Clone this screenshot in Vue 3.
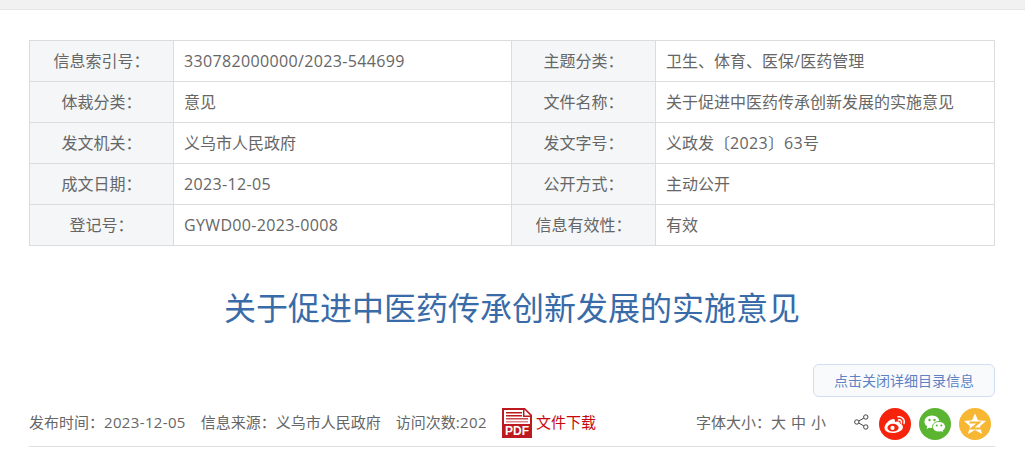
<script setup>
const rows = [
  ['信息索引号：', '330782000000/2023-544699', '主题分类：', '卫生、体育、医保/医药管理'],
  ['体裁分类：', '意见', '文件名称：', '关于促进中医药传承创新发展的实施意见'],
  ['发文机关：', '义乌市人民政府', '发文字号：', '义政发〔2023〕63号'],
  ['成文日期：', '2023-12-05', '公开方式：', '主动公开'],
  ['登记号：', 'GYWD00-2023-0008', '信息有效性：', '有效']
]
const runs = (s) => s.match(/[\x00-\x7f]+|[^\x00-\x7f]+/g).map((t) => ({ t, latin: /^[\x00-\x7f]/.test(t) }))
</script>

<template>
  <div class="page">
    <div class="topbar"></div>
    <main class="content">
      <table class="info">
        <colgroup>
          <col class="c-label" />
          <col class="c-val1" />
          <col class="c-label" />
          <col class="c-val2" />
        </colgroup>
        <tbody>
          <tr v-for="(r, i) in rows" :key="i">
            <th>{{ r[0] }}</th>
            <td><span v-for="(s, k) in runs(r[1])" :key="k" :class="{ latin: s.latin }">{{ s.t }}</span></td>
            <th>{{ r[2] }}</th>
            <td><span v-for="(s, k) in runs(r[3])" :key="k" :class="{ latin: s.latin }">{{ s.t }}</span></td>
          </tr>
        </tbody>
      </table>
      <h1 class="title">关于促进中医药传承创新发展的实施意见</h1>
      <div class="btn-row">
        <button class="toggle">点击关闭详细目录信息</button>
      </div>
      <div class="meta">
        <div class="meta-left">
          <span class="m1">发布时间：<span class="latin">2023-12-05</span></span>
          <span class="m2">信息来源：义乌市人民政府</span>
          <span class="m3">访问次数<span class="latin">:202</span></span>
          <svg class="pdf" width="30" height="30" viewBox="0 0 30 30">
            <path d="M0 0H23L30 7V30H0Z" fill="#bc1a20" />
            <path d="M2 2H21V9H28V28H2Z" fill="#fff" />
            <path d="M22.500 1.800L28.200 7.500H22.500Z" fill="#fff" />
            <rect x="4" y="4" width="16" height="1.500" fill="#bc1a20" />
            <rect x="4" y="7" width="16" height="1.500" fill="#bc1a20" />
            <rect x="4" y="10" width="22" height="1.500" fill="#c9474b" />
            <rect x="4" y="13" width="22" height="1.500" fill="#d98a8c" />
            <rect x="2" y="16" width="26" height="12.500" fill="#bc1a20" />
            <text x="15" y="27" text-anchor="middle" class="pdf-t">PDF</text>
          </svg>
          <span class="dl">文件下载</span>
        </div>
        <div class="meta-right">
          <span class="size">字体大小：</span>
          <span class="sz">大</span>
          <span class="sz">中</span>
          <span class="sz">小</span>
          <svg class="share" width="15" height="16" viewBox="0 0 15 16" fill="none" stroke="#444" stroke-width="1">
            <circle cx="2.800" cy="8" r="2.200" />
            <circle cx="11.800" cy="3" r="2.200" />
            <circle cx="11.800" cy="13" r="2.200" />
            <path d="M4.800 7L9.800 4.100M4.800 9L9.800 11.900" />
          </svg>
          <svg class="circle weibo" width="32" height="32" viewBox="0 0 32 32">
            <circle cx="16" cy="16" r="16" fill="#f6230c" />
            <path d="M13.500 25C9 25 5.500 23 5.500 19.800C5.500 16.300 10.500 11.500 14 11C15.800 10.800 16.400 12.200 15.800 14.100C18.500 13.200 20.800 13.400 20.800 15.600C22.600 16.100 23.900 17.300 23.900 19.200C23.900 22.300 19.300 25 13.500 25Z" fill="#fff" />
            <ellipse cx="14" cy="19.700" rx="5.600" ry="3.900" fill="#f6230c" />
            <circle cx="13.500" cy="19.900" r="2.100" fill="#fff" />
            <path d="M19 8.800C22.500 8 26.300 11.200 25 15.500M19.500 11.900C21.300 11.500 23 13 22.400 15" fill="none" stroke="#fff" stroke-width="1.500" stroke-linecap="round" />
          </svg>
          <svg class="circle" width="32" height="32" viewBox="0 0 32 32">
            <circle cx="16" cy="16" r="16" fill="#5cb531" />
            <path d="M13 7.500C8.800 7.500 5.500 10.300 5.500 13.800C5.500 15.800 6.600 17.500 8.300 18.600L7.600 21L10.300 19.700C11.200 20 12 20.100 13 20.100C17.200 20.100 20.500 17.300 20.500 13.800C20.500 10.300 17.200 7.500 13 7.500Z" fill="#fff" />
            <circle cx="10.500" cy="12" r="1.200" fill="#5cb531" />
            <circle cx="15.500" cy="12" r="1.200" fill="#5cb531" />
            <path d="M20 13.500C16.400 13.500 13.500 15.900 13.500 18.800C13.500 21.700 16.400 24 20 24C20.700 24 21.500 23.900 22.200 23.700L24.500 25L24 22.800C25.500 21.800 26.500 20.400 26.500 18.800C26.500 15.900 23.600 13.500 20 13.500Z" fill="#fff" stroke="#5cb531" stroke-width="1" />
            <circle cx="17.800" cy="17.500" r="1" fill="#5cb531" />
            <circle cx="22.300" cy="17.500" r="1" fill="#5cb531" />
          </svg>
          <svg class="circle" width="32" height="32" viewBox="0 0 32 32">
            <circle cx="16" cy="16" r="16" fill="#f7b733" />
            <path d="M16 5.500L19 12.300L27 13L21 18.200L23 26L16 22L9 26L11 18.200L5 13L13 12.300Z" fill="#fff" />
            <path d="M10.500 14.600H20L12.500 20.600H22.500" fill="none" stroke="#f7b733" stroke-width="2" />
          </svg>
        </div>
      </div>
    </main>
  </div>
</template>

<style scoped>
.page {
  width: 1025px;
  height: 464px;
  overflow: hidden;
  background: #fff;
  font-family: "Noto Sans CJK SC", "Open Sans", sans-serif;
  color: #666;
}
.latin {
  font-family: "Open Sans", "Noto Sans CJK SC", sans-serif;
  letter-spacing: 0.35px;
}
.topbar {
  height: 9px;
  background: #f1f1f1;
  border-bottom: 1px solid #e6e6e6;
}
.content {
  width: 966px;
  margin: 30px 0 0 29px;
}
.info {
  width: 965px;
  table-layout: fixed;
  border-collapse: collapse;
  font-size: 16px;
}
.c-label {
  width: 144px;
}
.c-val1 {
  width: 338px;
}
.c-val2 {
  width: 339px;
}
.info tr {
  height: 41px;
}
.info th,
.info td {
  border: 1px solid #dcdcdc;
  padding: 0 0 2px;
  font-weight: 400;
  line-height: 20px;
}
.info th {
  background: #f4f6f8;
  text-align: center;
}
.info td {
  padding-left: 10px;
  text-align: left;
}
.title {
  margin: 35px 0 0;
  height: 50px;
  line-height: 50px;
  font-size: 32px;
  font-weight: 400;
  text-align: center;
  color: #386ba8;
}
.btn-row {
  display: flex;
  justify-content: flex-end;
  margin-top: 33px;
}
.toggle {
  width: 182px;
  height: 33px;
  padding: 0 0 2px;
  border: 1px solid #d0ddf4;
  border-radius: 6px;
  background: #f9fafc;
  color: #5d82c4;
  font: 14px "Noto Sans CJK SC", sans-serif;
}
.meta {
  display: flex;
  justify-content: space-between;
  align-items: center;
  height: 49px;
  border-bottom: 1px solid #dfdfdf;
  font-size: 15px;
}
.meta-left,
.meta-right {
  display: flex;
  align-items: center;
}
.meta-right {
  margin-right: 4px;
}
.m1,
.m2,
.m3 {
  margin-right: 15px;
}
.dl {
  margin-left: 4px;
  color: #c9060c;
}
.pdf {
  display: block;
  margin-top: 3px;
}
.pdf-t {
  font: 700 12px "Liberation Sans", sans-serif;
  fill: #fff;
}
.sz {
  margin-right: 5px;
}
.share {
  margin-left: 23px;
}
.circle {
  display: block;
  margin-left: 8px;
  margin-top: 4px;
}
.weibo {
  margin-left: 10px;
}
</style>
